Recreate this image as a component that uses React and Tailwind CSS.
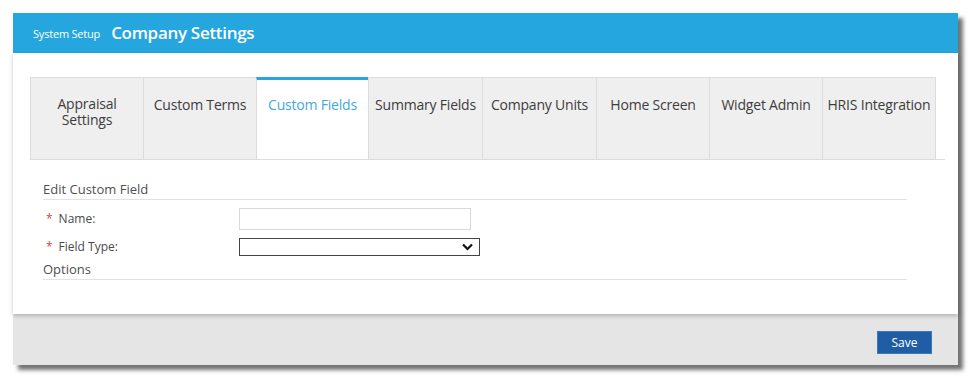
const tabs = [
  { label: 'Appraisal Settings', w: 'w-[113px]', twoLine: true },
  { label: 'Custom Terms', w: 'w-[113px]' },
  { label: 'Custom Fields', w: 'w-[112px]', active: true },
  { label: 'Summary Fields', w: 'w-[114px]' },
  { label: 'Company Units', w: 'w-[114px]' },
  { label: 'Home Screen', w: 'w-[113px]' },
  { label: 'Widget Admin', w: 'w-[113px]' },
  { label: 'HRIS Integration', w: 'w-[114px]', last: true },
];

function Tab({ tab }) {
  return (
    <div
      className={`${tab.w} h-full shrink-0 border-l border-[#dcdcdc] ${tab.last ? 'border-r' : ''} ${
        tab.active ? 'bg-white border-t-[3px] border-t-[#2aa4dc] pt-[16px] text-[#3fa9e0]' : 'bg-[#efefef] border-t border-t-[#dcdcdc] pt-[18px] text-[#3d3d3d]'
      } flex justify-center text-center text-[14px] leading-[17px] tracking-[-0.2px]`}
    >
      {tab.twoLine ? (
        <div className="flex flex-col">
          <span className="leading-[16px] h-[16px]">Appraisal</span>
          <span className="leading-[16px] h-[16px]">Settings</span>
        </div>
      ) : (
        <span className="whitespace-nowrap">{tab.label}</span>
      )}
    </div>
  );
}

export default function App() {
  return (
    <div className="h-[381px] w-[975px] bg-white overflow-hidden" style={{ fontFamily: '"Open Sans", "Noto Sans", sans-serif' }}>
      <div className="ml-[13px] mt-[13px] w-[945px] shadow-[5px_5px_4px_rgba(0,0,0,0.55)]">
        {/* Header */}
        <div className="h-[40px] bg-[#26a6df] flex items-center pl-[20px] gap-[11px] text-white">
          <span className="text-[11px] mt-[2px] tracking-[-0.2px]">System Setup</span>
          <span className="text-[17px] font-semibold tracking-[-0.3px]">Company Settings</span>
        </div>

        {/* Content */}
        <div className="relative z-10 h-[261px] bg-white pl-[17px] pt-[24px] shadow-[0_2px_4px_rgba(0,0,0,0.22)]">
          <div className="flex h-[83px] w-[915px] border-b border-[#dcdcdc]">
            {tabs.map((t) => (
              <Tab key={t.label} tab={t} />
            ))}
          </div>

          <div className="ml-[13px] mt-[20px] w-[864px]">
            <div className="border-b border-[#e2e2e2] text-[13px] leading-[18px] text-[#4f4f4f] pb-px">Edit Custom Field</div>

            <div className="mt-[8px] flex items-center h-[22px]">
              <div className="w-[196px] text-[12px] text-[#4a4a4a] pl-[3px]">
                <span className="text-[#e0433f] mr-[6px]">*</span>Name:
              </div>
              <input type="text" className="w-[232px] h-[22px] border border-[#d9d9d9] bg-white outline-none" />
            </div>

            <div className="mt-[8px] flex items-center h-[17px]">
              <div className="w-[196px] text-[12px] text-[#4a4a4a] pl-[3px]">
                <span className="text-[#e0433f] mr-[6px]">*</span>Field Type:
              </div>
              <div className="relative w-[241px] h-[18px] border border-[#444] bg-white">
                <svg className="absolute right-[6px] top-[4px]" width="11" height="8" viewBox="0 0 11 8">
                  <path d="M1 1.5 L5.5 6 L10 1.5" fill="none" stroke="#111" strokeWidth="2.2" />
                </svg>
              </div>
            </div>

            <div className="mt-[5px] border-b border-[#e2e2e2] text-[13px] leading-[18px] text-[#4f4f4f] pb-px">Options</div>
          </div>
        </div>

        {/* Footer */}
        <div className="h-[51px] bg-[#e5e5e5] flex justify-end pt-[17px] pr-[26px]">
          <button className="w-[55px] h-[23px] bg-[#1f5ea5] text-white text-[12px] border border-[#3a78bb]">Save</button>
        </div>
      </div>
    </div>
  );
}
